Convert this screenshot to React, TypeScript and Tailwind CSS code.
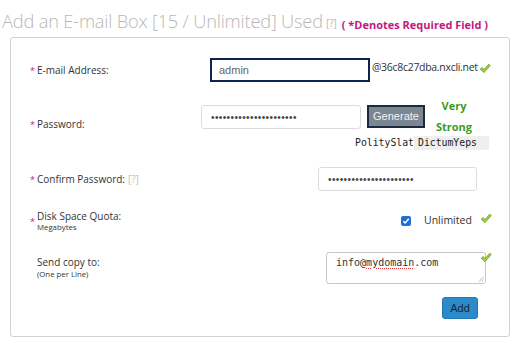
import React from "react";

function Check({ className = "" }: { className?: string }) {
  return (
    <svg width="12" height="11" viewBox="0 0 12 11" className={className}>
      <path
        d="M1.2 6.2 L3.2 4.6 L5 6.6 L9.8 1.2 L11.2 2.6 L5 9.6 Z"
        fill="#a6d33a"
        stroke="#5e9a1e"
        strokeWidth="0.8"
        strokeLinejoin="round"
      />
    </svg>
  );
}

const labelFont = { fontFamily: '"Open Sans", "Noto Sans", sans-serif' };

function Star() {
  return <span className="text-[#c2187d] text-[9px] w-[7px] leading-none">*</span>;
}

export default function App() {
  return (
    <div
      className="w-[512px] h-[339px] bg-white overflow-hidden text-[#333]"
      style={labelFont}
    >
      {/* Title */}
      <div className="h-[37px] flex items-end pb-[7px] pl-[2px] whitespace-nowrap">
        <span className="text-[18.3px] font-light text-[#b8b8b8] leading-none tracking-[-0.2px]">
          Add an E-mail Box [15 / Unlimited] Used
        </span>
        <span className="text-[10px] text-[#b8b8b8] ml-[3px] leading-none mb-[2px]">[?]</span>
        <span className="text-[11px] font-bold text-[#c2187d] ml-[5px] leading-none">
          ( *Denotes Required Field )
        </span>
      </div>

      {/* Panel */}
      <div className="ml-[10px] w-[500px] h-[300px] border border-[#d2d2d2] rounded-[3px] pl-[19px]">
        {/* Row 1 */}
        <div className="flex items-center mt-[20px] h-[24px]">
          <div className="w-[160px] flex items-center text-[10px]">
            <Star />
            <span>E-mail Address:</span>
          </div>
          <div className="ml-[20px] w-[160px] h-[24px] border-2 border-[#0c2451] flex items-center pl-[7px] text-[11px] text-[#666]" style={{ fontFamily: '"Liberation Sans", sans-serif' }}>
            admin
          </div>
          <span className="ml-[2px] text-[10.5px] tracking-[-0.3px] text-[#333] mb-[4px]">@36c8c27dba.nxcli.net</span>
          <Check className="ml-[1px] mb-[4px]" />
        </div>

        {/* Row 2 */}
        <div className="flex items-center mt-[18px]">
          <div className="w-[160px] flex items-center text-[10px] pb-[2px]">
            <Star />
            <span>Password:</span>
          </div>
          <div className="flex flex-col">
            <div className="flex items-center h-[34px]">
              <div className="ml-[11px] w-[160px] h-[24px] border border-[#dcdcdc] rounded-[3px] flex items-center pl-[9px] text-[10px] text-[#444] tracking-[0.4px]" style={{ fontFamily: '"Liberation Sans", sans-serif' }}>
                ••••••••••••••••••••••
              </div>
              <div className="ml-[6px] w-[58px] h-[23px] border-2 border-[#1b2a3e] bg-[#7b8693] text-[#f2f2f2] text-[11px] flex items-center justify-center mb-[1px]" style={{ fontFamily: '"Liberation Sans", sans-serif' }}>
                Generate
              </div>
              <div className="w-[58px] flex flex-col items-center text-[11px] font-bold text-[#3d9a1f] leading-[21px] mb-[2px]">
                <span>Very</span>
                <span>Strong</span>
              </div>
            </div>
            <div className="ml-[165px] h-[16px] flex items-center text-[9.8px] text-[#222] whitespace-pre mt-[1px]" style={{ fontFamily: '"DejaVu Sans Mono", monospace' }}>
              <span>PolitySlat</span>
              <span className="bg-[#efefef] pl-[4px] pr-[12px]">DictumYeps</span>
            </div>
          </div>
        </div>

        {/* Row 3 */}
        <div className="flex items-center mt-[16px] h-[24px]">
          <div className="w-[160px] flex items-center text-[10px] pt-[1px]">
            <Star />
            <span>Confirm Password:</span>
            <span className="text-[#c0c0c0] ml-[3px]">[?]</span>
          </div>
          <div className="ml-[128px] w-[159px] h-[24px] border border-[#dcdcdc] rounded-[3px] flex items-center pl-[9px] text-[10px] text-[#444] tracking-[0.4px]" style={{ fontFamily: '"Liberation Sans", sans-serif' }}>
            ••••••••••••••••••••••
          </div>
        </div>

        {/* Row 4 */}
        <div className="flex items-center mt-[17px] h-[26px]">
          <div className="w-[160px] flex items-center">
            <Star />
            <div className="flex flex-col">
              <span className="text-[10px] leading-[12px]">Disk Space Quota:</span>
              <span className="text-[7.8px] leading-[10px]">Megabytes</span>
            </div>
          </div>
          <div className="ml-[211px] w-[10px] h-[10px] rounded-[2px] bg-[#1f6fd8] flex items-center justify-center">
            <svg width="8" height="8" viewBox="0 0 8 8">
              <path d="M1.3 4.2 L3.1 6 L6.8 1.8" fill="none" stroke="white" strokeWidth="1.5" />
            </svg>
          </div>
          <span className="ml-[13px] text-[10.5px] text-[#333]">Unlimited</span>
          <Check className="ml-[8px] mb-[6px]" />
        </div>

        {/* Row 5 */}
        <div className="flex items-center mt-[18px] h-[32px]">
          <div className="w-[160px] flex items-center">
            <span className="w-[7px]" />
            <div className="flex flex-col">
              <span className="text-[10px] leading-[12px]">Send copy to:</span>
              <span className="text-[7.8px] leading-[12px]">(One per Line)</span>
            </div>
          </div>
          <div className="relative ml-[136px] w-[160px] h-[32px] border border-[#c8c8c8] rounded-[3px] pl-[9px] pt-[2px] text-[10px] text-[#333]" style={{ fontFamily: '"DejaVu Sans Mono", monospace' }}>
            <span>info@</span>
            <span className="underline decoration-dotted decoration-[#d33] underline-offset-2">mydomain</span>
            <span>.com</span>
            <svg width="6" height="6" viewBox="0 0 6 6" className="absolute right-[1px] bottom-[1px]">
              <path d="M5.5 1 L1 5.5 M5.5 3.5 L3.5 5.5" stroke="#999" strokeWidth="0.7" />
            </svg>
            <Check className="absolute right-[-7px] top-[-1px]" />
          </div>
        </div>

        {/* Row 6 */}
        <div className="flex mt-[13px]">
          <div className="ml-[412px] w-[36px] h-[22px] rounded-[3px] bg-[#2b8bc9] border border-[#2176b0] text-[#16263a] text-[11px] flex items-center justify-center" style={{ fontFamily: '"Liberation Sans", sans-serif' }}>
            Add
          </div>
        </div>
      </div>
    </div>
  );
}
